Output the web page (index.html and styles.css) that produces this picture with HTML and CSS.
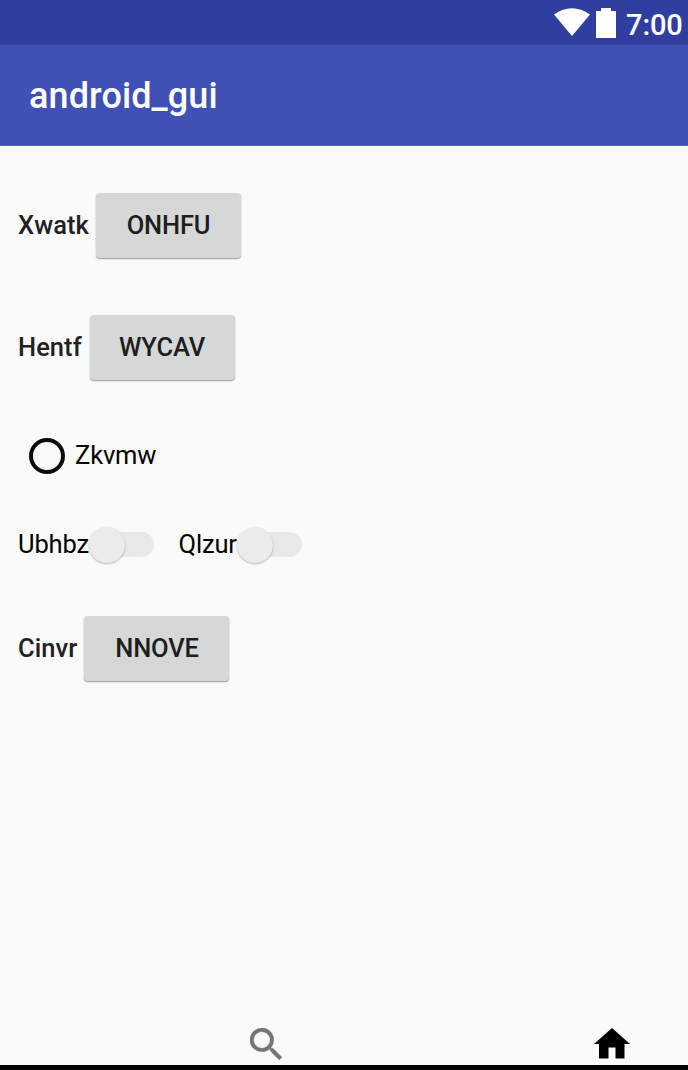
FILE: index.html
```
<!DOCTYPE html>
<html lang="en">
<head>
<meta charset="utf-8">
<title>android_gui</title>
<link rel="stylesheet" href="styles.css">
</head>
<body>
<div class="screen">
  <header class="status">
    <svg class="wifi" viewBox="0 0 36 28"><path d="M0 6.5Q18-6 36 6.5L18 28Z"/></svg>
    <svg class="battery" viewBox="0 0 20 30"><path d="M5 0h10v3h5v27H0V3h5Z"/></svg>
    <span class="clock">7:00</span>
  </header>
  <div class="appbar"><h1 class="title">android_gui</h1></div>
  <main class="content">
    <div class="row row-first"><span class="label label-a">Xwatk</span><button class="btn">ONHFU</button></div>
    <div class="row row-second"><span class="label label-b">Hentf</span><button class="btn">WYCAV</button></div>
    <label class="radio-row"><span class="radio"></span><span class="text">Zkvmw</span></label>
    <div class="switches">
      <div class="switch-item switch-a"><span class="text">Ubhbz</span><span class="track"><span class="thumb"></span></span></div>
      <div class="switch-item switch-b"><span class="text">Qlzur</span><span class="track"><span class="thumb"></span></span></div>
    </div>
    <div class="row row-last"><span class="label label-c">Cinvr</span><button class="btn btn-last">NNOVE</button></div>
  </main>
  <nav class="bottom">
    <svg class="search" viewBox="3 3 17.49 17.49"><path d="M15.5 14h-.79l-.28-.27A6.471 6.471 0 0 0 16 9.5 6.5 6.5 0 1 0 9.5 16c1.61 0 3.09-.59 4.23-1.57l.27.28v.79l5 4.99L20.49 19l-4.99-5zm-6 0C7.01 14 5 11.99 5 9.5S7.01 5 9.5 5 14 7.01 14 9.5 11.99 14 9.5 14z"/></svg>
    <svg class="home" viewBox="0 0 36 31"><path d="M18 0L36 16H30.500V30.500H21.500V19.500H14.500V30.500H5V16H0Z"/></svg>
  </nav>
</div>
</body>
</html>
```
FILE: styles.css
```
* { box-sizing: border-box; }
body { margin: 0; font-family: Roboto, sans-serif; background: #fafafa; }
.screen { width: 688px; height: 1070px; display: flex; flex-direction: column; overflow: hidden; font-size: 25.5px; color: #000; }
.status { height: 45px; background: #303f9f; display: flex; align-items: flex-start; justify-content: flex-end; padding: 8px 6px 0 0; color: #fff; fill: #fff; }
.wifi { width: 36px; height: 28px; margin-right: 6px; }
.battery { width: 20px; height: 30px; margin-right: 10px; }
.clock { width: 56px; font-size: 29px; line-height: 34px; font-weight: 500; letter-spacing: -.1px; }
.appbar { height: 101px; background: #3f51b5; border-bottom: 1px solid #5262bc; padding: 1px 0 0 29px; display: flex; align-items: center; }
.title { margin: 0; color: #fff; font-size: 36px; font-weight: 500; letter-spacing: .1px; }
.content { flex: 1; padding: 47px 18px 0; }
.row { display: flex; align-items: center; height: 65px; }
.row-first { margin-bottom: 57px; }
.row-second { margin-bottom: 57px; }
.label { font-weight: 500; color: #212121; white-space: nowrap; padding-bottom: 2px; letter-spacing: .05px; }
.label-a { width: 78px; }
.label-b { width: 71.500px; }
.label-c { width: 66px; }
.btn { width: 145px; height: 65px; border: 0; border-radius: 4px; background: #d6d7d7; color: #1d1e1e; font: 500 25.5px Roboto, sans-serif; letter-spacing: -.15px; box-shadow: 0 1px 1px rgba(0,0,0,.22), 0 1px 2px rgba(0,0,0,.2); padding: 0 0 2px; }
.btn-last { padding-left: 1px; }
.text { padding-bottom: 2px; letter-spacing: -.15px; }
.radio-row { display: flex; align-items: center; height: 38px; padding-left: 11px; }
.radio { width: 36px; height: 36px; border: 4px solid #0c0c0c; border-radius: 50%; margin-right: 10px; }
.switches { display: flex; margin-top: 50px; height: 39px; align-items: center; }
.switch-item { display: flex; align-items: center; }
.switch-a { width: 135.500px; margin-right: 25px; }
.switch-b { width: 123.500px; }
.switch-item .text { flex: 1; white-space: nowrap; }
.track { width: 65px; height: 25px; border-radius: 13px; background: #e8e8e8; display: flex; align-items: center; }
.thumb { width: 36px; height: 36px; flex: none; border-radius: 50%; background: #ebebeb; box-shadow: 0 1px 2px rgba(0,0,0,.28); }
.row-last { margin-top: 52px; }
.bottom { height: 60px; border-bottom: 5px solid #000; display: flex; padding-left: 250px; align-items: flex-start; }
.search { width: 32px; height: 32px; margin-top: 18px; fill: #757575; stroke: #757575; stroke-width: .2; }
.home { width: 36px; height: 31px; margin: 18px 0 0 312px; }
```
